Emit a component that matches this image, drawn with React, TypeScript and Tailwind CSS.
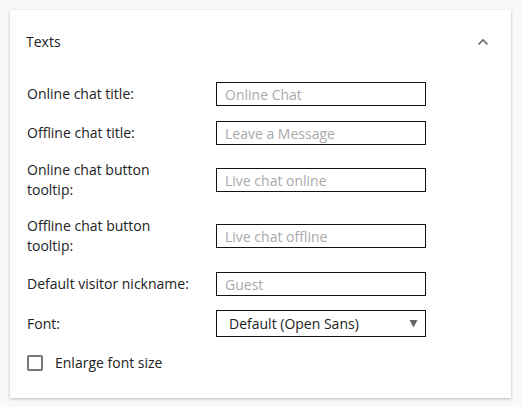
import React, { useState } from 'react';

interface TextField {
  label: string;
  placeholder: string;
  extra?: string;
}

const fields: TextField[] = [
  { label: 'Online chat title:', placeholder: 'Online Chat' },
  { label: 'Offline chat title:', placeholder: 'Leave a Message' },
  { label: 'Online chat button tooltip:', placeholder: 'Live chat online' },
  { label: 'Offline chat button tooltip:', placeholder: 'Live chat offline', extra: 'mt-[1px]' },
  { label: 'Default visitor nickname:', placeholder: 'Guest', extra: 'mt-[1px]' },
];

const App: React.FC = () => {
  const [enlarge, setEnlarge] = useState(false);

  return (
    <div className="min-h-[407px] bg-[#f9f9f9] pt-[10px] pl-[10px] pr-[11px] pb-[9px] font-['Open_Sans',sans-serif] text-[14px] text-[#222]">
      <div className="bg-white shadow-[0_1px_3px_rgba(0,0,0,0.25)] pl-[17px] pr-[22px] pt-[21px] pb-[25px]">
        {/* Section header */}
        <div className="flex items-center justify-between h-[22px]">
          <h3 className="text-[14px] leading-[22px] -ml-[1px]">Texts</h3>
          <svg width="12" height="8" viewBox="0 0 12 8">
            <path d="M1.5 6.5 L6 2 L10.5 6.5" fill="none" stroke="#666" strokeWidth="1.6" />
          </svg>
        </div>

        <div className="mt-[29px] flex flex-col gap-[15px]">
          {fields.map((f) => (
            <div key={f.label} className={`flex items-center ${f.extra ?? ''}`}>
              <label className="w-[189px] shrink-0 pr-[22px] leading-[20px]">{f.label}</label>
              <input
                type="text"
                placeholder={f.placeholder}
                className="w-[210px] h-[24px] border border-[#111] px-[8px] text-[14px] placeholder:text-[#aaa] outline-none"
              />
            </div>
          ))}

          <div className="flex items-center -mt-[1px]">
            <label className="w-[189px] shrink-0 leading-[20px]">Font:</label>
            <div className="relative w-[210px] h-[27px] border border-[#111] flex items-center pl-[12px]">
              <span className="text-[#222]">Default (Open Sans)</span>
              <svg width="9" height="9" viewBox="0 0 9 9" className="absolute right-[7px] top-[8px]">
                <path d="M0.5 1 L8.5 1 L4.5 8.5 Z" fill="#666" />
              </svg>
            </div>
          </div>

          <label className="flex items-center gap-[12px] cursor-pointer">
            <span
              onClick={() => setEnlarge(!enlarge)}
              className="w-[16px] h-[16px] border-2 border-[#777] rounded-[2px] bg-white"
            />
            <span>Enlarge font size</span>
          </label>
        </div>
      </div>
    </div>
  );
};

export default App;
